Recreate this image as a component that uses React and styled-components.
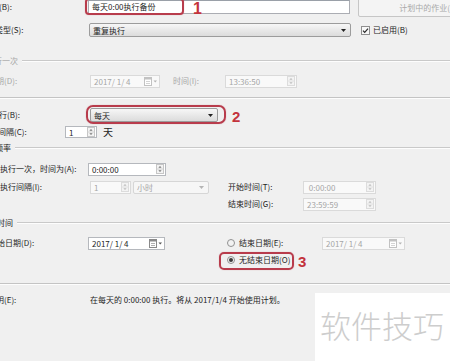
import React from 'react';
import styled, { createGlobalStyle } from 'styled-components';

const GlobalStyle = createGlobalStyle`
  html, body { margin: 0; padding: 0; background: #f0f0f0; overflow: hidden; }
  body { font-family: "Noto Sans CJK SC", "Noto Sans", sans-serif; font-size: 8px; color: #1e1e1e; }
`;

const Page = styled.div`
  position: relative;
  width: 450px;
  height: 361px;
  overflow: hidden;
  background: #f0f0f0;
  display: flex;
  flex-direction: column;
`;

const Row = styled.div`
  flex: none;
  display: flex;
  align-items: center;
  height: ${p => p.$h ?? 14}px;
  margin-top: ${p => p.$mt ?? 0}px;
`;

const LeftCol = styled.div`
  flex: none;
  display: flex;
  align-items: center;
  width: ${p => p.$w}px;
`;

const Label = styled.span`
  flex: none;
  width: ${p => (p.$w ?? 0) + (p.$cut ?? 0)}px;
  margin-left: ${p => (p.$gap ?? 0) - (p.$cut ?? 0)}px;
  white-space: nowrap;
  line-height: 12px;
  font-size: ${p => p.$size ?? 8}px;
  color: ${p => (p.$muted ? '#a6a6a6' : '#1e1e1e')};
`;

const GroupHeader = styled.div`
  flex: none;
  display: flex;
  align-items: center;
  height: 10px;
  margin-top: ${p => p.$mt}px;
`;

const GroupTitle = styled.span`
  flex: none;
  margin-left: ${p => -p.$cut}px;
  white-space: nowrap;
  line-height: 10px;
  color: ${p => (p.$muted ? '#a6a6a6' : '#1e1e1e')};
`;

const Rule = styled.div`
  flex: 1;
  height: 1px;
  margin-left: 4px;
  background: #c9c9c9;
  border-bottom: 1px solid #fdfdfd;
`;

const Separator = styled.div`
  flex: none;
  height: 1px;
  margin-top: ${p => p.$mt}px;
  background: #c4c4c4;
  border-bottom: 1px solid #fdfdfd;
`;

const TextBox = styled.div`
  flex: none;
  box-sizing: border-box;
  width: ${p => p.$w}px;
  height: 14px;
  padding: 0 3px;
  border: 1px solid #abadb3;
  border-top-color: #9aa0a8;
  background: #fff;
  line-height: 12px;
  white-space: nowrap;
`;

const Button = styled.div`
  flex: none;
  box-sizing: border-box;
  width: ${p => p.$w}px;
  height: 19px;
  margin-left: 8px;
  border: 1px solid #c6c6c6;
  border-radius: 2px;
  background: #f4f4f4;
  color: #a9a9a9;
  text-align: center;
  line-height: 17px;
  white-space: nowrap;
`;

const Combo = styled.div`
  flex: none;
  box-sizing: border-box;
  display: flex;
  align-items: center;
  justify-content: space-between;
  width: ${p => p.$w}px;
  height: ${p => p.$h ?? 14}px;
  margin-left: ${p => p.$gap ?? 0}px;
  padding: 0 4px 0 3px;
  border: 1px solid ${p => (p.$muted ? '#d6d6d6' : '#9c9c9c')};
  border-radius: 2px;
  background: ${p => (p.$muted ? '#f6f6f6' : 'linear-gradient(#f7f7f7, #e9e9e9 50%, #dcdcdc)')};
  color: ${p => (p.$muted ? '#a6a6a6' : '#1e1e1e')};
  white-space: nowrap;
`;

const Field = styled.div`
  flex: none;
  box-sizing: border-box;
  display: flex;
  align-items: center;
  justify-content: space-between;
  width: ${p => p.$w}px;
  height: ${p => p.$h ?? 13}px;
  margin-left: ${p => p.$gap ?? 0}px;
  padding: 0 1px 0 3px;
  border: 1px solid ${p => (p.$muted ? '#dadada' : '#b5b8bd')};
  background: ${p => (p.$muted ? '#f9f9f9' : '#fff')};
  color: ${p => (p.$muted ? '#a6a6a6' : '#1e1e1e')};
  white-space: nowrap;
  line-height: 11px;
`;

const Check = styled.span`
  flex: none;
  display: inline-flex;
  margin-left: ${p => p.$gap ?? 0}px;
`;

const Summary = styled.span`
  white-space: nowrap;
  line-height: 12px;
`;

const Callout = styled.div`
  position: absolute;
  left: ${p => p.$x}px;
  top: ${p => p.$y}px;
  width: ${p => p.$w}px;
  height: ${p => p.$h}px;
  box-sizing: border-box;
  border: 2px solid #b83c4c;
  border-radius: ${p => p.$r ?? 5}px;
  box-shadow: 0 0 1px rgba(184, 60, 76, 0.5);
  pointer-events: none;
`;

const Num = styled.span`
  position: absolute;
  left: ${p => p.$x}px;
  top: ${p => p.$y}px;
  font-family: "Liberation Sans", Arial, sans-serif;
  font-weight: 700;
  font-size: ${p => p.$size ?? 16}px;
  line-height: 1;
  color: #c3333c;
`;

const Watermark = styled.div`
  position: absolute;
  left: 315px;
  top: 293px;
  right: 0;
  bottom: 0;
  background: #fff;
  box-sizing: border-box;
  padding: 16px 0 0 5px;
  font-family: "Noto Sans CJK SC", sans-serif;
  font-weight: 300;
  font-size: 31px;
  line-height: 31px;
  color: #cdcdcd;
  white-space: nowrap;
`;

const Arrow = ({ muted }) => (
  <svg width="5" height="3" viewBox="0 0 5 3">
    <path d="M0 0 H5 L2.5 3Z" fill={muted ? '#b4b4b4' : '#222'} />
  </svg>
);

const SpinArrows = ({ muted }) => (
  <svg width="8" height="10" viewBox="0 0 8 10">
    <rect x="0.5" y="0.5" width="7" height="9" fill="#f3f3f3" stroke={muted ? '#dcdcdc' : '#c6c6c6'} />
    <line x1="0.5" y1="5" x2="7.5" y2="5" stroke={muted ? '#e0e0e0' : '#d2d2d2'} />
    <path d="M4 2 L5.6 3.8 H2.4Z" fill={muted ? '#bcbcbc' : '#777'} />
    <path d="M4 8 L5.6 6.2 H2.4Z" fill={muted ? '#bcbcbc' : '#777'} />
  </svg>
);

const CalendarDrop = ({ muted }) => (
  <svg width="14" height="9" viewBox="0 0 14 9">
    <rect x="0.5" y="0.5" width="7" height="8" fill="#fff" stroke={muted ? '#c2c2c2' : '#8a8a8a'} />
    <rect x="0.5" y="0.5" width="7" height="2" fill={muted ? '#c2c2c2' : '#8a8a8a'} />
    <path d="M2 4.5 H6 M2 6.5 H6" stroke={muted ? '#d4d4d4' : '#b0b0b0'} />
    <path d="M9.5 3.5 H13 L11.25 5.5Z" fill={muted ? '#b4b4b4' : '#555'} />
  </svg>
);

const CheckBox = () => (
  <svg width="9" height="9" viewBox="0 0 9 9">
    <rect x="0.5" y="0.5" width="8" height="8" fill="#f8f8f8" stroke="#8f8f8f" />
    <path d="M2 4.6 L3.7 6.3 L7 2.6" fill="none" stroke="#2a2a2a" strokeWidth="1.2" />
  </svg>
);

const Radio = ({ on }) => (
  <svg width="8" height="8" viewBox="0 0 8 8">
    <circle cx="4" cy="4" r="3.5" fill="#f2f2f2" stroke="#909090" />
    {on && <circle cx="4" cy="4" r="2" fill="#3c3c3c" />}
  </svg>
);

export default function App() {
  return (
    <>
      <GlobalStyle />
      <Page>
        <Row $h={14} $mt={0}>
          <Label $w={88} $cut={17}>名称(B):</Label>
          <TextBox $w={262}>每天0:00执行备份</TextBox>
          <Button $w={140}>计划中的作业(J)</Button>
        </Row>

        <Row $mt={9}>
          <Label $w={89} $cut={21}>计划类型(S):</Label>
          <Combo $w={262}>
            <span>重复执行</span>
            <Arrow />
          </Combo>
          <Check $gap={10}><CheckBox /></Check>
          <Label $gap={3}>已启用(B)</Label>
        </Row>

        <GroupHeader $mt={19}>
          <GroupTitle $cut={14} $muted>执行一次</GroupTitle>
          <Rule />
        </GroupHeader>

        <Row $mt={8}>
          <Label $w={90} $cut={12} $muted>日期(D):</Label>
          <Field $w={70} $muted>
            <span>2017/ 1/ 4</span>
            <CalendarDrop muted />
          </Field>
          <Label $gap={13} $w={52} $muted>时间(I):</Label>
          <Field $w={72} $muted>
            <span>13:36:50</span>
            <SpinArrows muted />
          </Field>
        </Row>

        <Separator $mt={9} />

        <Row $mt={9}>
          <Label $w={90} $cut={9}>执行(B):</Label>
          <Combo $w={128}>
            <span>每天</span>
            <Arrow />
          </Combo>
        </Row>

        <Row $mt={3}>
          <Label $w={65} $cut={18}>执行间隔(C):</Label>
          <Field $w={32} $h={12}>
            <span>1</span>
            <SpinArrows />
          </Field>
          <Label $gap={6} $size={10}>天</Label>
        </Row>

        <GroupHeader $mt={4}>
          <GroupTitle $cut={21}>每天频率</GroupTitle>
          <Rule />
        </GroupHeader>

        <Row $mt={9}>
          <Label $w={88}>执行一次，时间为(A):</Label>
          <Field $w={78} $h={13}>
            <span>0:00:00</span>
            <SpinArrows />
          </Field>
        </Row>

        <Row $mt={4}>
          <LeftCol $w={228}>
            <Label $w={90}>执行间隔(I):</Label>
            <Field $w={41} $muted>
              <span>1</span>
              <SpinArrows muted />
            </Field>
            <Combo $w={76} $h={13} $gap={2} $muted>
              <span>小时</span>
              <Arrow muted />
            </Combo>
          </LeftCol>
          <Label $w={75}>开始时间(T):</Label>
          <Field $w={73} $muted>
            <span>&nbsp;0:00:00</span>
            <SpinArrows muted />
          </Field>
        </Row>

        <Row $mt={3}>
          <LeftCol $w={228} />
          <Label $w={75}>结束时间(G):</Label>
          <Field $w={73} $muted>
            <span>23:59:59</span>
            <SpinArrows muted />
          </Field>
        </Row>

        <GroupHeader $mt={7}>
          <GroupTitle $cut={19}>持续时间</GroupTitle>
          <Rule />
        </GroupHeader>

        <Row $mt={8}>
          <LeftCol $w={227}>
            <Label $w={88} $cut={11}>开始日期(D):</Label>
            <Field $w={77}>
              <span>2017/ 1/ 4</span>
              <CalendarDrop />
            </Field>
          </LeftCol>
          <Check><Radio /></Check>
          <Label $gap={4} $w={83}>结束日期(E):</Label>
          <Field $w={83} $muted>
            <span>2017/ 1/ 4</span>
            <CalendarDrop muted />
          </Field>
        </Row>

        <Row $mt={3}>
          <LeftCol $w={227} />
          <Check><Radio on /></Check>
          <Label $gap={4}>无结束日期(O)</Label>
        </Row>

        <Separator $mt={16} />

        <Row $mt={8}>
          <Label $w={90} $cut={12}>说明(E):</Label>
          <Summary>在每天的 0:00:00 执行。将从 2017/1/4 开始使用计划。</Summary>
        </Row>

        <Callout $x={85} $y={-2} $w={99} $h={17} $r={4} />
        <Num $x={193} $y={1} $size={16}>1</Num>

        <Callout $x={86} $y={105} $w={140} $h={19} $r={7} />
        <Num $x={232} $y={109} $size={15}>2</Num>

        <Callout $x={219} $y={252} $w={75} $h={18} $r={5} />
        <Num $x={298} $y={254} $size={15}>3</Num>

        <Watermark>软件技巧</Watermark>
      </Page>
    </>
  );
}
